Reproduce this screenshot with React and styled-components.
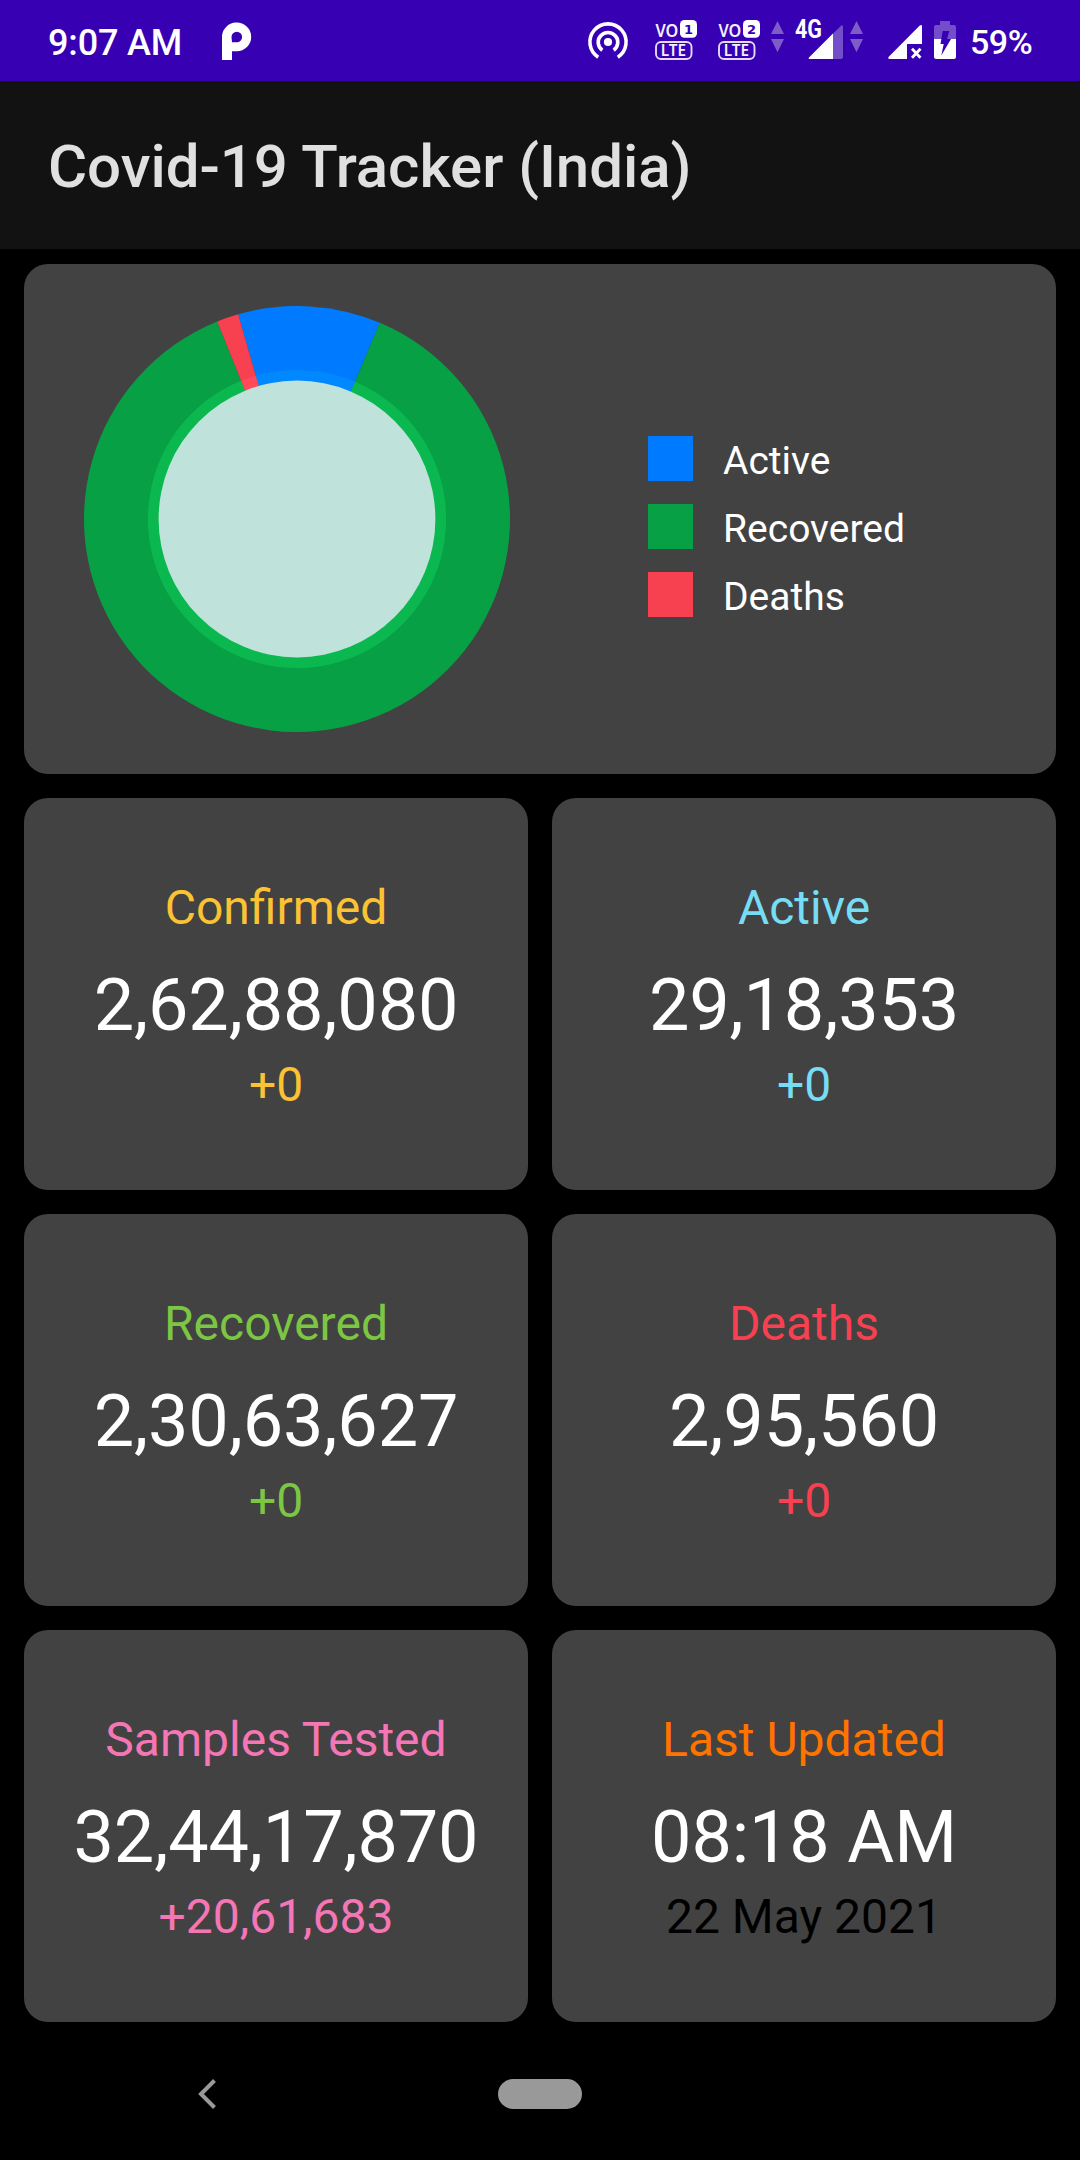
import React from "react";
import styled, { createGlobalStyle } from "styled-components";

const GlobalStyle = createGlobalStyle`
  * { box-sizing: border-box; }
  html, body { margin: 0; background: #000; }
  body { font-family: Roboto, "Noto Sans", sans-serif; }
  svg { display: block; flex: none; }
`;

const Screen = styled.div`
  width: 1080px;
  height: 2160px;
  display: flex;
  flex-direction: column;
  background: #000;
  overflow: hidden;
`;

const StatusBar = styled.header`
  height: 81px;
  flex: none;
  display: flex;
  justify-content: space-between;
  padding: 0 48px;
  background: #3700b3;
  color: #fff;
`;

const StatusGroup = styled.div`
  display: flex;
  align-items: flex-start;
`;

const StatusText = styled.span`
  font-size: ${(p) => p.$size}px;
  font-weight: 500;
  line-height: 42px;
  margin-left: ${(p) => p.$gap || 0}px;
  padding-top: ${(p) => p.$top}px;
  width: ${(p) => p.$width}px;
  white-space: nowrap;
  letter-spacing: ${(p) => p.$spacing || 0}px;
`;

const StatusIcon = styled.svg`
  width: ${(p) => p.$width}px;
  height: 81px;
  margin-left: ${(p) => p.$gap || 0}px;
  overflow: visible;
  font-family: Roboto, sans-serif;
`;

const VolteIcon = styled(StatusIcon)`
  font-family: "Noto Sans", sans-serif;
`;

const AppBar = styled.div`
  height: 168px;
  flex: none;
  display: flex;
  align-items: center;
  padding: 4px 48px 0;
  background: #121212;
`;

const Title = styled.h1`
  margin: 0;
  font-size: 60px;
  font-weight: 500;
  line-height: 70px;
  letter-spacing: -0.05px;
  color: #e0e0e0;
  white-space: nowrap;
`;

const Content = styled.main`
  display: flex;
  flex-direction: column;
  gap: 24px;
  padding: 15px 24px 0;
`;

const Card = styled.section`
  background: #424242;
  border-radius: 24px;
`;

const ChartCard = styled(Card)`
  height: 510px;
  display: flex;
  align-items: center;
  padding-left: 60px;
`;

const Legend = styled.ul`
  list-style: none;
  display: flex;
  flex-direction: column;
  gap: 23px;
  margin: 15px 0 0 138px;
  padding: 0;
`;

const LegendItem = styled.li`
  height: 45px;
  display: flex;
  gap: 30px;
  color: #fff;
  font-size: 39px;
  line-height: 51px;
`;

const Swatch = styled.span`
  width: 45px;
  height: 45px;
  background: ${(p) => p.$color};
`;

const StatGrid = styled.div`
  display: grid;
  grid-template-columns: 1fr 1fr;
  grid-auto-rows: 392px;
  gap: 24px;
`;

const StatCard = styled(Card)`
  display: flex;
  flex-direction: column;
  align-items: center;
  padding-top: 82px;
  white-space: nowrap;
`;

const StatLabel = styled.h2`
  margin: 0;
  font-size: 48px;
  font-weight: 400;
  line-height: 56px;
  color: ${(p) => p.$color};
`;

const StatValue = styled.div`
  margin-top: 28px;
  font-size: 72px;
  line-height: 84px;
  letter-spacing: -0.15px;
  color: #fff;
`;

const StatChange = styled.div`
  margin-top: 9px;
  font-size: 48px;
  line-height: 56px;
  color: ${(p) => p.$color};
`;

const NavBar = styled.nav`
  flex: 1;
  display: flex;
  align-items: flex-start;
  padding: 57px 0 0 198px;
`;

const HomePill = styled.div`
  width: 84px;
  height: 30px;
  margin-left: 282px;
  border-radius: 15px;
  background: #999;
`;

const SLICES = [
  { name: "Active", color: "#007aff", inner: "#0089ff", from: -16.05, to: 22.9 },
  { name: "Recovered", color: "#08a045", inner: "#0ab84f", from: 22.9, to: 338 },
  { name: "Deaths", color: "#f74050", inner: "#ff4a5c", from: 338, to: 343.95 },
];

const STATS = [
  { label: "Confirmed", value: "2,62,88,080", change: "+0", color: "#fbc233" },
  { label: "Active", value: "29,18,353", change: "+0", color: "#76ddf5" },
  { label: "Recovered", value: "2,30,63,627", change: "+0", color: "#7cc644" },
  { label: "Deaths", value: "2,95,560", change: "+0", color: "#f74050" },
  { label: "Samples Tested", value: "32,44,17,870", change: "+20,61,683", color: "#f576b4" },
  { label: "Last Updated", value: "08:18 AM", change: "22 May 2021", color: "#ff7300", changeColor: "#000" },
];

function wedge(radius, from, to) {
  const point = (deg) => {
    const a = (deg * Math.PI) / 180;
    return `${213 + radius * Math.sin(a)} ${213 - radius * Math.cos(a)}`;
  };
  return `M213 213L${point(from)}A${radius} ${radius} 0 ${to - from > 180 ? 1 : 0} 1 ${point(to)}Z`;
}

const Donut = () => (
  <svg width="426" height="426" viewBox="0 0 426 426" role="img" aria-label="Case distribution">
    {SLICES.map((s) => <path key={s.name} d={wedge(213, s.from, s.to)} fill={s.color} />)}
    {SLICES.map((s) => <path key={s.name} d={wedge(149.1, s.from, s.to)} fill={s.inner} />)}
    <circle cx="213" cy="213" r="138.4" fill="#bfe3db" />
  </svg>
);

const Volte = ({ sim, gap }) => (
  <VolteIcon $width={43} $gap={gap} viewBox="0 0 43 81" fill="#f4efff">
    <text x="0.5" y="37.4" fontSize="18" fontWeight="600" textLength="22.8" lengthAdjust="spacingAndGlyphs">VO</text>
    <rect x="25" y="20" width="17" height="17.7" rx="4.5" fill="#fff" />
    <text x="33.5" y="33.5" fontSize="13" fontWeight="700" fontFamily="DejaVu Sans, sans-serif" textAnchor="middle" fill="#3700b3">{sim}</text>
    <rect x="1" y="42" width="35.5" height="17" rx="5" fill="none" stroke="#e4daf8" strokeWidth="1.9" />
    <text x="5.8" y="55.9" fontSize="15.3" fontWeight="600" textLength="25.3" lengthAdjust="spacingAndGlyphs">LTE</text>
  </VolteIcon>
);

const DataArrows = ({ gap }) => (
  <StatusIcon $width={13} $gap={gap} viewBox="0 0 13 81" fill="#7d5cc7">
    <path d="M0 34L6.5 21L13 34ZM0 39L6.5 52.3L13 39Z" />
  </StatusIcon>
);

export default function App() {
  return (
    <>
      <GlobalStyle />
      <Screen>
        <StatusBar>
          <StatusGroup>
            <StatusText $size={36} $top={22} $width={174} $spacing={-0.15}>9:07 AM</StatusText>
            <StatusIcon $width={30} viewBox="0 0 30 81" fill="#fff">
              <path fillRule="evenodd" d="M0 60V37.5A14.6 14.3 0 1 1 14.6 51.2H10V60ZM10 42.3H14.8A5.3 5.3 0 1 0 9.5 37Z" />
            </StatusIcon>
          </StatusGroup>
          <StatusGroup>
            <StatusIcon $width={40} viewBox="0 0 40 81" fill="none" stroke="#fff" strokeWidth="3.6">
              <path d="M10.2 57.2A18.1 18.1 0 1 1 29.8 57.2" />
              <path d="M14.3 50.2A9.8 9.8 0 1 1 25.7 50.2" />
              <circle cx="20" cy="42" r="4.1" fill="#fff" stroke="none" />
            </StatusIcon>
            <Volte sim="1" gap={27} />
            <Volte sim="2" gap={20} />
            <DataArrows gap={10} />
            <StatusIcon $width={48} $gap={12} viewBox="0 0 48 81" fill="#fff">
              <path d="M13 57.5L45 25.8Q47 24.5 47 27V57Q47 59 45 59H14Q12 59 13 57.5Z" fill="#734dca" />
              <path d="M37 33.5V59H14Q12 59 13 57.5Z" />
              <text x="-1" y="37.5" fontSize="26" fontWeight="700" textLength="27" lengthAdjust="spacingAndGlyphs">4G</text>
            </StatusIcon>
            <DataArrows gap={6} />
            <StatusIcon $width={34} $gap={25} viewBox="0 0 34 81" fill="#fff">
              <path d="M1 56.5L31.5 25.8Q34 24 34 26.5V44H19V59H2Q-1 59 1 56.5Z" />
              <path d="M24 48.8L32.5 57.8M32.5 48.8L24 57.8" stroke="#fff" strokeWidth="2.8" />
            </StatusIcon>
            <StatusIcon $width={22} $gap={12} viewBox="0 0 22 81">
              <path d="M6 21H16V25H20Q22 25 22 27V39H0V27Q0 25 2 25H6Z" fill="#734dca" />
              <path d="M0 39H22V57Q22 59 20 59H2Q0 59 0 57Z" fill="#fff" />
              <path d="M8.7 31H15.3L13 39H17L7.3 55.5L9.7 44H6.5Z" fill="#3700b3" />
            </StatusIcon>
            <StatusText $size={34} $top={21} $width={62} $gap={14} $spacing={-0.5}>59%</StatusText>
          </StatusGroup>
        </StatusBar>
        <AppBar>
          <Title>Covid-19 Tracker (India)</Title>
        </AppBar>
        <Content>
          <ChartCard>
            <Donut />
            <Legend>
              {SLICES.map((s) => (
                <LegendItem key={s.name}>
                  <Swatch $color={s.color} />
                  {s.name}
                </LegendItem>
              ))}
            </Legend>
          </ChartCard>
          <StatGrid>
            {STATS.map((s) => (
              <StatCard key={s.label}>
                <StatLabel $color={s.color}>{s.label}</StatLabel>
                <StatValue>{s.value}</StatValue>
                <StatChange $color={s.changeColor || s.color}>{s.change}</StatChange>
              </StatCard>
            ))}
          </StatGrid>
        </Content>
        <NavBar>
          <svg width="18" height="30" viewBox="0 0 18 30" fill="none" stroke="#999" strokeWidth="4">
            <path d="M16.5 1.5L3 15L16.5 28.5" />
          </svg>
          <HomePill />
        </NavBar>
      </Screen>
    </>
  );
}
